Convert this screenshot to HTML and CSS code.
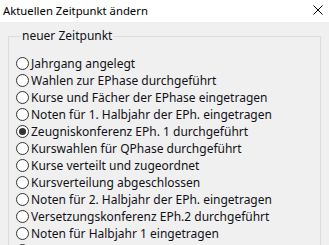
FILE: index.html
```html
<!DOCTYPE html>
<html lang="de">
<head>
    <meta charset="UTF-8">
    <meta name="viewport" content="width=device-width, initial-scale=1.0">
    <title>Aktuellen Zeitpunkt ändern</title>
    <link rel="stylesheet" href="styles.css">
</head>
<body>

    <div class="titlebar">
        <span class="titel">Aktuellen Zeitpunkt ändern</span>
        <span class="schliessen">
            <svg width="10" height="10" viewBox="0 0 10 10"><path d="M0.5 0.5 L9.5 9.5 M9.5 0.5 L0.5 9.5" stroke="#000" stroke-width="1" fill="none"/></svg>
        </span>
    </div>

    <fieldset class="gruppe">
        <legend>neuer Zeitpunkt</legend>
        <label class="zeile"><input type="radio" name="zp"> Jahrgang angelegt</label>
        <label class="zeile"><input type="radio" name="zp"> Wahlen zur EPhase durchgeführt</label>
        <label class="zeile"><input type="radio" name="zp"> Kurse und Fächer der EPhase eingetragen</label>
        <label class="zeile"><input type="radio" name="zp"> Noten für 1. Halbjahr der EPh. eingetragen</label>
        <label class="zeile"><input type="radio" name="zp" checked> Zeugniskonferenz EPh. 1 durchgeführt</label>
        <label class="zeile"><input type="radio" name="zp"> Kurswahlen für QPhase durchgeführt</label>
        <label class="zeile"><input type="radio" name="zp"> Kurse verteilt und zugeordnet</label>
        <label class="zeile"><input type="radio" name="zp"> Kursverteilung abgeschlossen</label>
        <label class="zeile"><input type="radio" name="zp"> Noten für 2. Halbjahr der EPh. eingetragen</label>
        <label class="zeile"><input type="radio" name="zp"> Versetzungskonferenz EPh.2 durchgeführt</label>
        <label class="zeile"><input type="radio" name="zp"> Noten für Halbjahr 1 eingetragen</label>
        <label class="zeile"><input type="radio" name="zp"> Zeugniskonferenz Halbjahr 1 durchgeführt</label>
    </fieldset>

</body>
</html>
```

FILE: styles.css
```css
* {
    margin: 0;
    padding: 0;
    box-sizing: border-box;
}
html, body {
    width: 100%;
    height: 100%;
}
body {
    background: #f0f0f0;
    font-family: "Noto Sans", "Open Sans", sans-serif;
    font-size: 12px;
    color: #101018;
    overflow: hidden;
}

.titlebar {
    height: 22px;
    background: #fff;
    display: flex;
    align-items: center;
    justify-content: space-between;
    padding: 0 6px 1px 3px;
}
.titel {
    color: #000;
    font-size: 11.3px;
}
.schliessen {
    display: flex;
    width: 10px;
    height: 10px;
    margin-top: -2px;
}

.gruppe {
    margin: 6px 0 0 8px;
    width: 313px;
    border: 1px solid #dcdcdc;
    padding: 11px 0 0 7px;
    display: flex;
    flex-direction: column;
}
.gruppe legend {
    margin-left: 5px;
    padding: 0 1px;
    line-height: 16px;
}

.zeile {
    display: flex;
    align-items: center;
    gap: 2px;
    height: 17px;
    white-space: nowrap;
}
.zeile input {
    appearance: none;
    -webkit-appearance: none;
    width: 13px;
    height: 13px;
    border: 1px solid #333;
    border-radius: 50%;
    background: #fff;
    flex: none;
    position: relative;
}
.zeile input:checked:after {
    content: "";
    position: absolute;
    left: 2px;
    top: 2px;
    width: 7px;
    height: 7px;
    border-radius: 50%;
    background: #333;
}
```
